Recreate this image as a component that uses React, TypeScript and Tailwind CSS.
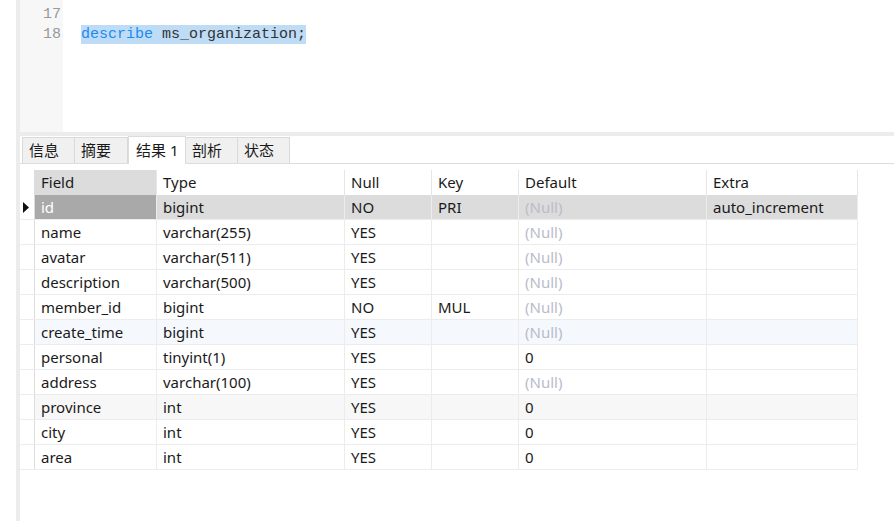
import React from 'react';

const cols = [
  { name: 'Field', w: 'w-[122px]' },
  { name: 'Type', w: 'w-[188px]' },
  { name: 'Null', w: 'w-[87px]' },
  { name: 'Key', w: 'w-[87px]' },
  { name: 'Default', w: 'w-[188px]' },
  { name: 'Extra', w: 'w-[151px]' },
];

const rows: string[][] = [
  ['id', 'bigint', 'NO', 'PRI', '(Null)', 'auto_increment'],
  ['name', 'varchar(255)', 'YES', '', '(Null)', ''],
  ['avatar', 'varchar(511)', 'YES', '', '(Null)', ''],
  ['description', 'varchar(500)', 'YES', '', '(Null)', ''],
  ['member_id', 'bigint', 'NO', 'MUL', '(Null)', ''],
  ['create_time', 'bigint', 'YES', '', '(Null)', ''],
  ['personal', 'tinyint(1)', 'YES', '', '0', ''],
  ['address', 'varchar(100)', 'YES', '', '(Null)', ''],
  ['province', 'int', 'YES', '', '0', ''],
  ['city', 'int', 'YES', '', '0', ''],
  ['area', 'int', 'YES', '', '0', ''],
];

const tabs = ['信息', '摘要', '结果 1', '剖析', '状态'];

function rowBg(i: number) {
  if (i === 0) return 'bg-[#dcdcdc]';
  if (i === 5) return 'bg-[#f5f9fd]';
  if (i === 8) return 'bg-[#f7f7f7]';
  return 'bg-white';
}

export default function App() {
  return (
    <div
      className="flex w-[894px] h-[521px] bg-white overflow-hidden text-[#1a1a1a]"
      style={{ fontFamily: '"Noto Sans", "Noto Sans CJK SC", sans-serif' }}
    >
      <div className="w-[16px] shrink-0 bg-white" />
      <div className="w-[4px] shrink-0 bg-[#ececec]" />
      <div className="flex-1 flex flex-col">
        {/* editor */}
        <div className="h-[132px] flex">
          <div className="w-[43px] bg-[#f7f7f7] pt-[5px] pr-[2px] text-right font-['Liberation_Mono',monospace] text-[15px] leading-[20px] text-[#999]">
            <div>17</div>
            <div>18</div>
          </div>
          <div className="pt-[25px] pl-[18px] font-['Liberation_Mono',monospace] text-[15px] leading-[20px]">
            <span className="bg-[#bfdcf7] py-[1px]">
              <span className="text-[#1c8af2]">describe</span>
              <span className="text-[#333]"> ms_organization;</span>
            </span>
          </div>
        </div>
        <div className="h-[4px] bg-[#ececec]" />

        {/* tabs */}
        <div className="h-[28px] flex items-end pl-[2px] border-b border-[#dcdcdc]">
          {tabs.map((t, i) =>
            i === 2 ? (
              <div
                key={t}
                className="h-[28px] -mb-px w-[58px] bg-white border border-b-0 border-[#dcdcdc] flex items-center pl-[7px] text-[15px]"
              >
                {t}
              </div>
            ) : (
              <div
                key={t}
                className={`h-[26px] ${i < 2 ? 'w-[53px]' : 'w-[52px]'} bg-[#f0f0f0] border border-b-0 border-l-0 first:border-l border-[#d9d9d9] flex items-center pl-[6px] text-[15px]`}
              >
                {t}
              </div>
            ),
          )}
        </div>

        {/* grid */}
        <div className="mt-[6px] text-[15px]">
          <div className="flex h-[25px]">
            <div className="w-[15px] border-r border-[#dcdcdc]" />
            {cols.map((c, ci) => (
              <div
                key={c.name}
                className={`${c.w} flex items-center pl-[6px] border-r border-[#e6e6e6] ${
                  ci === 0 ? 'bg-[#dcdcdc]' : 'bg-white'
                }`}
              >
                {c.name}
              </div>
            ))}
          </div>
          {rows.map((r, ri) => (
            <div key={ri} className="flex h-[25px] border-b border-[#ececec] w-[838px]">
              <div className="w-[15px] border-r border-[#dcdcdc] bg-white flex items-center pl-[3px]">
                {ri === 0 && (
                  <svg width="7" height="11" viewBox="0 0 7 11">
                    <path d="M0 0 L6 5.5 L0 11 Z" fill="#111" />
                  </svg>
                )}
              </div>
              {r.map((v, ci) => (
                <div
                  key={ci}
                  className={`${cols[ci].w} flex items-center pl-[6px] border-r border-[#ececec] ${
                    ri === 0 && ci === 0 ? 'bg-[#a9a9a9] text-white' : rowBg(ri)
                  } ${v === '(Null)' ? 'text-[#b9bccb]' : ''}`}
                >
                  {v}
                </div>
              ))}
            </div>
          ))}
        </div>
      </div>
    </div>
  );
}
